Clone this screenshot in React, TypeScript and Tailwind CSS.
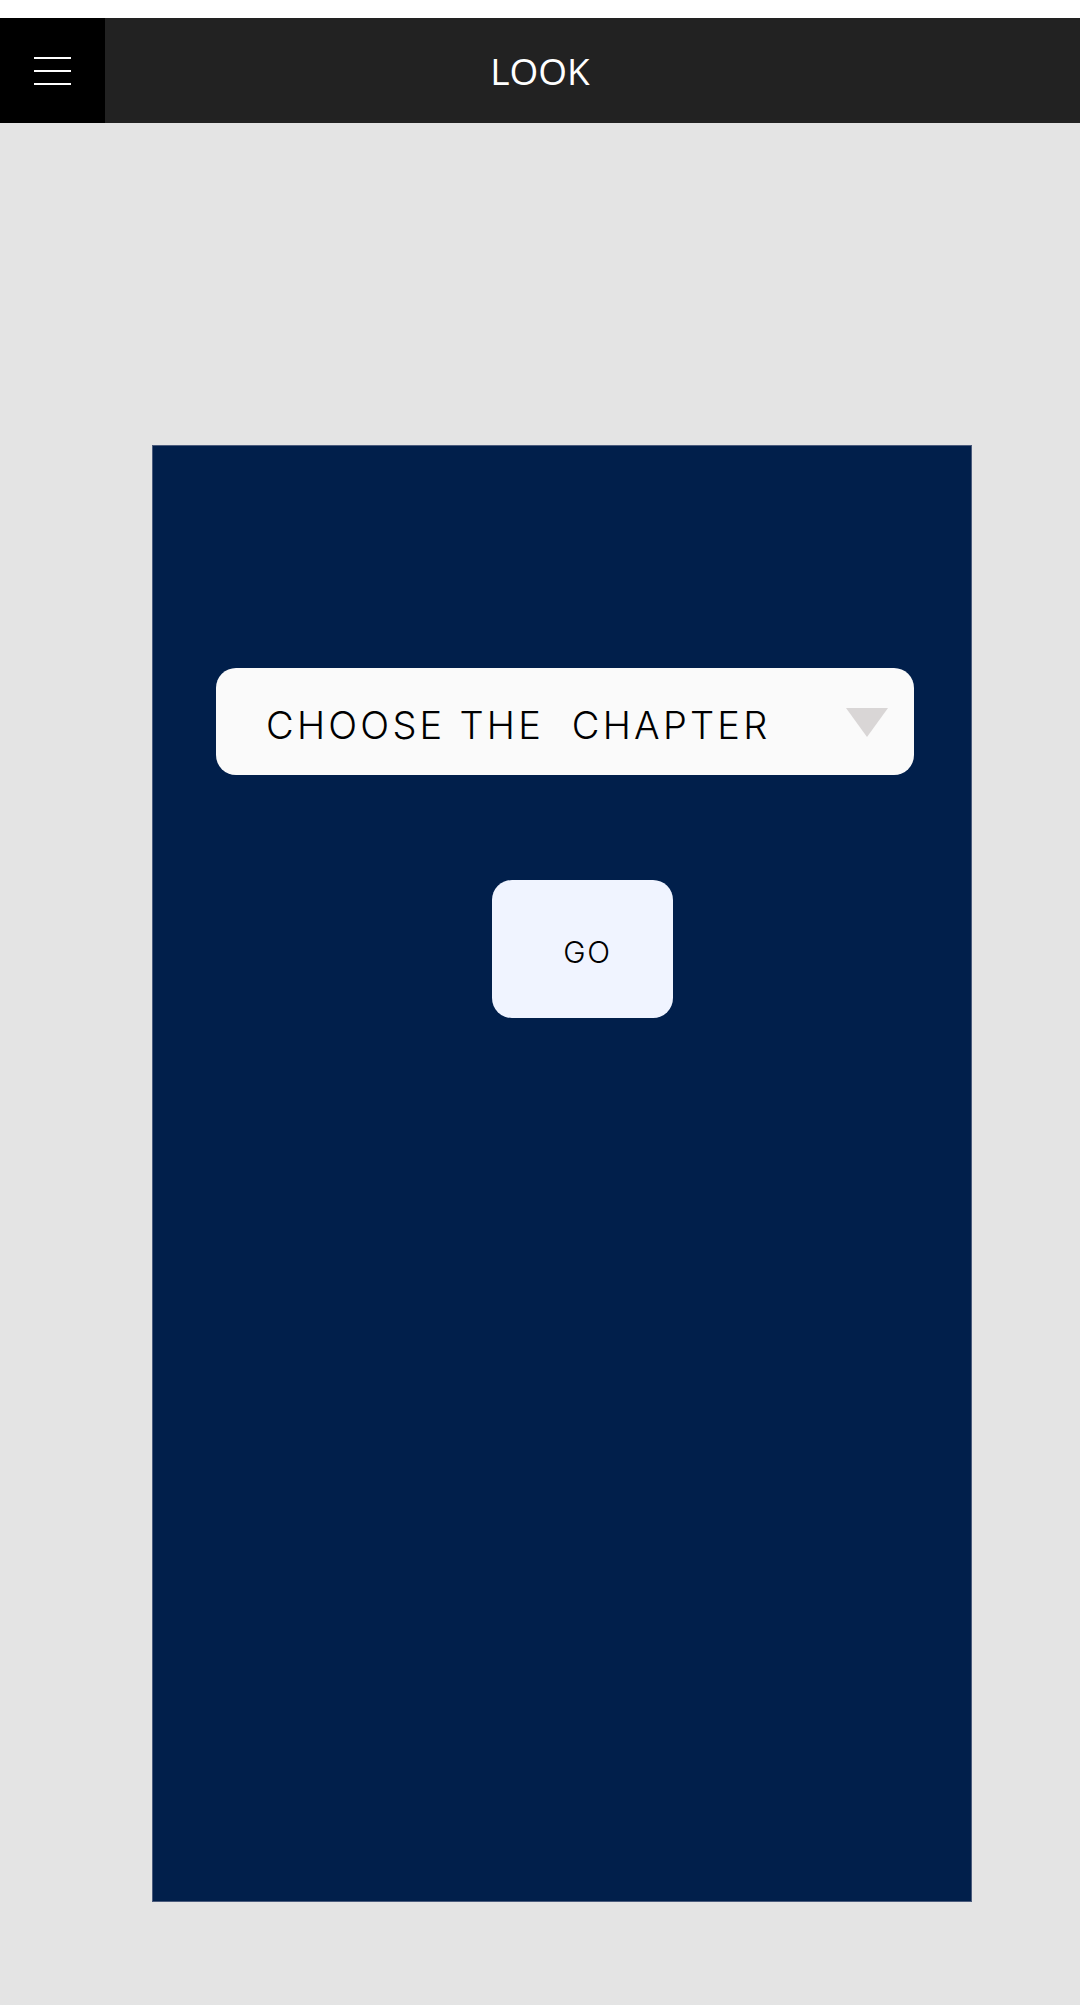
export default function App() {
  return (
    <div className="min-h-[2005px] bg-[#e4e4e4] flex flex-col">
      <div className="h-[18px] bg-white" />

      {/* Top bar */}
      <header className="relative h-[105px] bg-[#222222] flex items-center">
        <button className="w-[105px] h-full bg-black flex flex-col items-center justify-center gap-[11px]">
          <span className="block w-[37px] h-[2px] bg-white" />
          <span className="block w-[37px] h-[2px] bg-white" />
          <span className="block w-[37px] h-[2px] bg-white" />
        </button>
        <div className="absolute inset-0 flex items-center justify-center pointer-events-none">
          <span className="text-[37px] text-white font-['Open_Sans',sans-serif] leading-none">LOOK</span>
        </div>
      </header>

      {/* Chapter picker */}
      <main className="pt-[322px] pl-[152px]">
        <div className="w-[820px] h-[1457px] bg-[#011f4b] border border-[#4b5b7c] flex flex-col">
          <div className="mt-[222px] ml-[63px] w-[698px] h-[107px] bg-[#fafafa] rounded-[20px] flex items-center justify-between pl-[50px] pr-[26px]">
            <span className="whitespace-pre text-[38px] font-light text-black font-['Inter',sans-serif] tracking-[0.085em] leading-none mt-[6px]">
              CHOOSE THE  CHAPTER
            </span>
            <svg width="42" height="29" viewBox="0 0 42 29" className="mt-[2px]">
              <polygon points="0,0 42,0 21,29" fill="#d9d6d6" />
            </svg>
          </div>

          <button className="mt-[105px] ml-[339px] w-[181px] h-[138px] bg-[#f0f4ff] rounded-[20px] flex items-center justify-center pl-[10px]">
            <span className="text-[30px] font-light text-black font-['Inter',sans-serif] tracking-[0.06em] leading-none mt-[6px]">GO</span>
          </button>
        </div>
      </main>
    </div>
  );
}
